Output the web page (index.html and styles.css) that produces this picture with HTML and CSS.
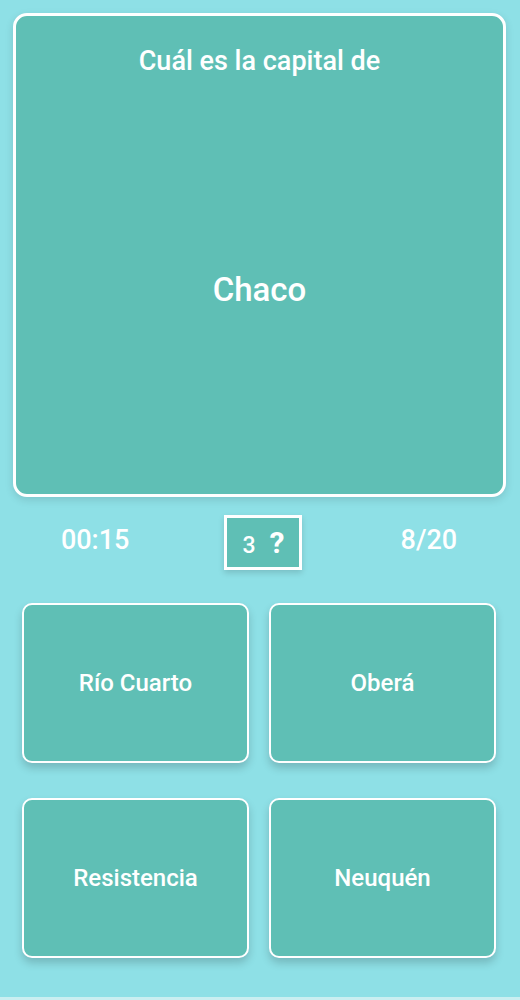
FILE: index.html
```html
<!DOCTYPE html>
<html lang="es">
<head>
  <meta charset="UTF-8">
  <meta name="viewport" content="width=device-width, initial-scale=1.0">
  <title>Capitales</title>
  <link rel="stylesheet" href="styles.css">
</head>
<body>
  <div class="screen">
    <div class="question-card">
      <p class="question">Cuál es la capital de</p>
      <p class="province">Chaco</p>
    </div>

    <div class="stats">
      <span class="timer">00:15</span>
      <div class="hints">
        <span class="hint-count">3</span>
        <span class="hint-mark">?</span>
      </div>
      <span class="progress">8/20</span>
    </div>

    <div class="answers">
      <button class="answer">Río Cuarto</button>
      <button class="answer">Oberá</button>
      <button class="answer">Resistencia</button>
      <button class="answer">Neuquén</button>
    </div>
  </div>
  <div class="edge"></div>
</body>
</html>
```

FILE: styles.css
```css
* {
  margin: 0;
  padding: 0;
  box-sizing: border-box;
}
html, body {
  height: 100%;
}
body {
  background: #8ee0e6;
  font-family: Roboto, 'Noto Sans', sans-serif;
  color: #fff;
  display: flex;
  flex-direction: column;
}
.screen {
  flex: 1;
  padding: 13px 14px 0 13px;
}
.question-card {
  height: 484px;
  background: #5fbfb5;
  border: 3px solid #fff;
  border-radius: 14px;
  box-shadow: 0 3px 8px rgba(0, 0, 0, 0.12);
  display: flex;
  flex-direction: column;
  align-items: center;
  padding-top: 26px;
}
.question {
  font-size: 27px;
  font-weight: 500;
  line-height: 38px;
}
.province {
  font-size: 33px;
  font-weight: 500;
  margin-top: 190px;
}
.stats {
  display: grid;
  grid-template-columns: 1fr 1fr 1fr;
  align-items: center;
  justify-items: center;
  margin-top: 18px;
  height: 55px;
}
.timer, .progress {
  font-size: 27px;
  font-weight: 500;
  margin-top: -6px;
}
.progress {
  margin-left: 10px;
}
.hints {
  width: 78px;
  height: 55px;
  margin-left: 8px;
  background: #5fbfb5;
  border: 3px solid #fff;
  box-shadow: 0 3px 6px rgba(0, 0, 0, 0.15);
  display: flex;
  align-items: center;
  justify-content: center;
  gap: 14px;
}
.hint-count {
  font-size: 23px;
  font-weight: 500;
  margin-top: 5px;
}
.hint-mark {
  font-size: 30px;
  font-weight: 700;
}
.answers {
  display: grid;
  grid-template-columns: 1fr 1fr;
  grid-auto-rows: 160px;
  column-gap: 20px;
  row-gap: 35px;
  margin-top: 33px;
  padding: 0 10px 0 9px;
}
.answer {
  background: #5fbfb5;
  border: 2px solid #fff;
  border-radius: 10px;
  box-shadow: 0 5px 9px rgba(0, 0, 0, 0.18);
  font-family: Roboto, 'Noto Sans', sans-serif;
  font-size: 24px;
  font-weight: 500;
  color: #fff;
  cursor: pointer;
}
.edge {
  height: 3px;
  background: #c9eff1;
}
```
